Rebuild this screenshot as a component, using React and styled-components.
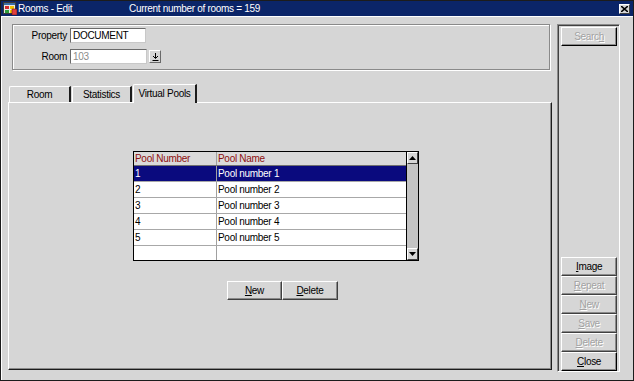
import React from 'react';
import styled, { createGlobalStyle } from 'styled-components';

const GlobalStyle = createGlobalStyle`
    html, body {
        margin: 0;
        padding: 0;
        background: #d6d6d6;
    }
    * {
        box-sizing: border-box;
    }
`

const pools = [
    { number: '1', name: 'Pool number 1' },
    { number: '2', name: 'Pool number 2' },
    { number: '3', name: 'Pool number 3' },
    { number: '4', name: 'Pool number 4' },
    { number: '5', name: 'Pool number 5' },
    { number: '', name: '' },
]

const sideButtons = [
    { label: 'Image', key: 'I', enabled: true },
    { label: 'Repeat', key: 'R' },
    { label: 'New', key: 'N' },
    { label: 'Save', key: 'S' },
    { label: 'Delete', key: 'D' },
    { label: 'Close', key: 'C', enabled: true, strong: true },
]

// underline the mnemonic letter
const Mnemonic = ({ text, letter }) => {
    const i = text.indexOf(letter)
    if (i < 0) return text
    return (<>
        {text.slice(0, i)}<u>{text[i]}</u>{text.slice(i + 1)}
    </>)
}

const FormIcon = () => (
    <svg width="14" height="13" viewBox="0 0 14 13">
        <rect x="0.5" y="0.5" width="12" height="11" fill="#e8e8e8" stroke="#3a3a3a" />
        <rect x="1" y="1" width="11" height="2" fill="#3a6ea5" />
        <rect x="2" y="4" width="4" height="3" fill="#d62b2b" />
        <rect x="7" y="4" width="4" height="3" fill="#f2c400" />
        <rect x="2" y="8" width="4" height="3" fill="#2f9e3a" />
        <rect x="7" y="8" width="4" height="3" fill="#f2c400" />
        <rect x="9" y="7" width="5" height="6" fill="#e04040" stroke="#6a1010" strokeWidth="0.6" />
    </svg>
)

const App = () => {
    return (<Window>
        <GlobalStyle />
        <TitleBar>
            <FormIcon />
            <TitleText>Rooms - Edit</TitleText>
            <TitleInfo>Current number of rooms = 159</TitleInfo>
            <CloseBox>
                <svg width="7" height="6" viewBox="0 0 7 6">
                    <path d="M0 0 L7 6 M7 0 L0 6" stroke="#000" strokeWidth="1.6" />
                </svg>
            </CloseBox>
        </TitleBar>
        <Body>
            <LeftCol>
                <SearchPanel>
                    <FieldGrid>
                        <Label>Property</Label>
                        <TextField>DOCUMENT</TextField>
                        <Label>Room</Label>
                        <FieldRow>
                            <TextField wide disabled>103</TextField>
                            <LovButton>
                                <svg width="7" height="8" viewBox="0 0 7 8">
                                    <path d="M3.5 0 V5 M1 3 L3.5 5.5 L6 3" stroke="#000" strokeWidth="1" fill="none" />
                                    <path d="M0.5 7.5 H6.5" stroke="#000" strokeWidth="1" />
                                </svg>
                            </LovButton>
                        </FieldRow>
                    </FieldGrid>
                </SearchPanel>
                <TabRow>
                    <Tab width={62}>Room</Tab>
                    <Tab width={60}>Statistics</Tab>
                    <Tab width={64} selected>Virtual Pools</Tab>
                </TabRow>
                <TabPanel>
                    <PoolTable>
                        <GridArea>
                            <HeaderRow>
                                <HeaderCell>Pool Number</HeaderCell>
                                <HeaderCell last>Pool Name</HeaderCell>
                            </HeaderRow>
                            {pools.map((p, i) => (
                                <Row key={i} selected={i === 0} last={i === pools.length - 1}>
                                    <Cell>{p.number}</Cell>
                                    <Cell last>{p.name}</Cell>
                                </Row>
                            ))}
                        </GridArea>
                        <ScrollBar>
                            <ScrollButton>
                                <svg width="7" height="4" viewBox="0 0 7 4"><path d="M3.5 0 L7 4 L0 4 Z" fill="#000" /></svg>
                            </ScrollButton>
                            <ScrollTrack />
                            <ScrollButton>
                                <svg width="7" height="4" viewBox="0 0 7 4"><path d="M0 0 L7 0 L3.5 4 Z" fill="#000" /></svg>
                            </ScrollButton>
                        </ScrollBar>
                    </PoolTable>
                    <ButtonBar>
                        <Button width={55}><Mnemonic text="New" letter="N" /></Button>
                        <Button width={56}><Mnemonic text="Delete" letter="D" /></Button>
                    </ButtonBar>
                </TabPanel>
            </LeftCol>
            <SidePanel>
                <Button width={56} height={19} disabled strong><Mnemonic text="Search" letter="h" /></Button>
                <SideStack>
                    {sideButtons.map(b => (
                        <Button key={b.label} width={56} height={19} disabled={!b.enabled} strong={b.strong}>
                            <Mnemonic text={b.label} letter={b.key} />
                        </Button>
                    ))}
                </SideStack>
            </SidePanel>
        </Body>
    </Window>);
}

export default App;

const Window = styled.div`
    width: 634px;
    height: 381px;
    border: 1px solid #1c1c1c;
    background: #d6d6d6;
    display: flex;
    flex-direction: column;
    font-family: "Liberation Sans", Arial, sans-serif;
    font-size: 10px;
    letter-spacing: -0.3px;
    color: #000;
`

const TitleBar = styled.div`
    height: 15px;
    background: #0b2568;
    display: flex;
    align-items: center;
    padding: 0 3px 0 2px;
    color: #fff;
`

const TitleText = styled.span`
    margin-left: 1px;
    width: 111px;
`

const TitleInfo = styled.span`
    flex: 1;
`

const CloseBox = styled.div`
    width: 11px;
    height: 10px;
    background: #d6d6d6;
    border-top: 1px solid #fff;
    border-left: 1px solid #fff;
    border-right: 1px solid #404040;
    border-bottom: 1px solid #404040;
    display: flex;
    align-items: center;
    justify-content: center;
`

const Body = styled.div`
    flex: 1;
    display: flex;
    gap: 5px;
    padding: 7px 13px 0 6px;
    border-top: 1px solid #fff;
    border-left: 1px solid #fff;
`

const LeftCol = styled.div`
    width: 545px;
    display: flex;
    flex-direction: column;
`

const SearchPanel = styled.div`
    height: 46px;
    margin: 0 2px 0 4px;
    border: 1px solid #8a8a8a;
    box-shadow: inset 1px 1px 0 #fff, 1px 1px 0 #fff;
    padding: 3px 0 0 1px;
`

const FieldGrid = styled.div`
    display: grid;
    grid-template-columns: 53px auto;
    column-gap: 3px;
    row-gap: 6px;
    align-items: center;
`

const Label = styled.span`
    text-align: right;
`

const FieldRow = styled.div`
    display: flex;
    align-items: center;
    gap: 2px;
`

const TextField = styled.div`
    width: ${p => p.wide ? 77 : 76}px;
    height: 15px;
    background: #fff;
    border-top: 1px solid #6a6a6a;
    border-left: 1px solid #6a6a6a;
    border-right: 1px solid #c8c8c8;
    border-bottom: 1px solid #c8c8c8;
    padding: 1px 0 0 2px;
    line-height: 12px;
    color: ${p => p.disabled ? '#8c8c8c' : '#000'};
`

const LovButton = styled.div`
    width: 12px;
    height: 13px;
    border-top: 1px solid #fff;
    border-left: 1px solid #fff;
    border-right: 1px solid #6a6a6a;
    border-bottom: 1px solid #6a6a6a;
    display: flex;
    align-items: center;
    justify-content: center;
`

const TabRow = styled.div`
    display: flex;
    align-items: flex-end;
    gap: 1px;
    height: 18px;
    margin: 14px 0 0 1px;
    position: relative;
    z-index: 1;
`

const Tab = styled.div`
    width: ${p => p.width}px;
    height: ${p => p.selected ? 19 : 16}px;
    margin-bottom: ${p => p.selected ? -1 : 0}px;
    background: #d6d6d6;
    border-top: 1px solid #fff;
    border-left: 1px solid #fff;
    border-right: 2px solid #1c1c1c;
    border-top-left-radius: 2px;
    display: flex;
    align-items: center;
    justify-content: center;
    padding-bottom: ${p => p.selected ? 2 : 0}px;
`

const TabPanel = styled.div`
    height: 268px;
    border-top: 1px solid #fff;
    border-left: 1px solid #fff;
    border-right: 1px solid #1c1c1c;
    border-bottom: 1px solid #1c1c1c;
    box-shadow: inset -1px -1px 0 #8a8a8a;
    display: flex;
    flex-direction: column;
    align-items: flex-start;
    padding: 48px 0 0 124px;
`

const PoolTable = styled.div`
    width: 286px;
    height: 110px;
    border: 1px solid #000;
    display: flex;
    background: #fff;
`

const GridArea = styled.div`
    flex: 1;
    display: flex;
    flex-direction: column;
`

const HeaderRow = styled.div`
    display: grid;
    grid-template-columns: 83px 1fr;
    height: 14px;
    background: #dadada;
    border-bottom: 1px solid #707070;
`

const HeaderCell = styled.div`
    color: #8e1010;
    padding-left: 1px;
    line-height: 13px;
    border-right: ${p => p.last ? 'none' : '1px solid #a0a0a0'};
`

const Row = styled.div`
    display: grid;
    grid-template-columns: 83px 1fr;
    height: 16px;
    flex: ${p => p.last ? 1 : 'none'};
    background: ${p => p.selected ? '#0a0a7e' : '#fff'};
    color: ${p => p.selected ? '#fff' : '#000'};
    border-bottom: ${p => p.last ? 'none' : '1px solid #a8a8a8'};
`

const Cell = styled.div`
    padding-left: 1px;
    line-height: 15px;
    border-right: ${p => p.last ? 'none' : '1px solid #a0a0a0'};
`

const ScrollBar = styled.div`
    width: 12px;
    border-left: 1px solid #000;
    display: flex;
    flex-direction: column;
    background: #cdcdcd;
`

const ScrollButton = styled.div`
    height: 12px;
    background: #d6d6d6;
    border-top: 1px solid #fff;
    border-left: 1px solid #fff;
    border-right: 1px solid #404040;
    border-bottom: 1px solid #404040;
    display: flex;
    align-items: center;
    justify-content: center;
`

const ScrollTrack = styled.div`
    flex: 1;
    background-color: #c4c4c4;
    background-image: radial-gradient(#e4e4e4 0.5px, transparent 0.6px);
    background-size: 2px 2px;
`

const ButtonBar = styled.div`
    display: flex;
    margin: 20px 0 0 94px;
`

const Button = styled.div`
    width: ${p => p.width}px;
    height: ${p => p.height || 19}px;
    background: #d6d6d6;
    border-top: 1px solid #fff;
    border-left: 1px solid #fff;
    border-right: 1px solid ${p => p.strong ? '#000' : '#404040'};
    border-bottom: 1px solid ${p => p.strong ? '#000' : '#404040'};
    box-shadow: inset -1px -1px 0 #8a8a8a;
    display: flex;
    align-items: center;
    justify-content: center;
    padding-bottom: 1px;
    color: ${p => p.disabled ? '#a2a2a2' : '#000'};
    text-shadow: ${p => p.disabled ? '1px 1px 0 #fff' : 'none'};
`

const SidePanel = styled.div`
    width: 63px;
    height: 348px;
    border-top: 1px solid #8a8a8a;
    border-left: 1px solid #8a8a8a;
    border-right: 1px solid #fff;
    border-bottom: 1px solid #fff;
    box-shadow: inset 1px 1px 0 #404040;
    display: flex;
    flex-direction: column;
    justify-content: space-between;
    padding: 2px 0 0 3px;
`

const SideStack = styled.div`
    display: flex;
    flex-direction: column;
`
